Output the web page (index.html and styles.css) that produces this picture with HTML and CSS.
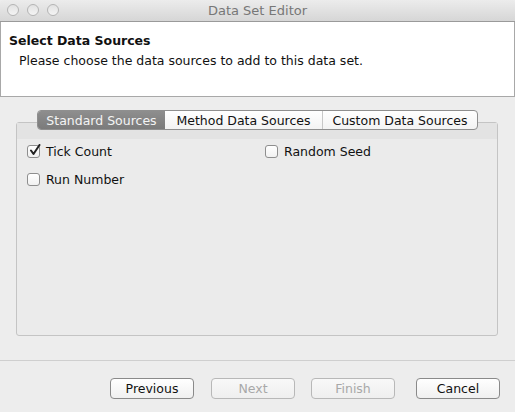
FILE: index.html
```html
<!DOCTYPE html>
<html>
<head>
<meta charset="utf-8">
<link rel="stylesheet" href="styles.css">
</head>
<body>
<div class="window">
  <div class="titlebar">
    <div class="lights">
      <span class="light"></span><span class="light"></span><span class="light"></span>
    </div>
    <div class="title">Data Set Editor</div>
  </div>
  <div class="header">
    <div class="h-title">Select Data Sources</div>
    <div class="h-desc">Please choose the data sources to add to this data set.</div>
  </div>
  <div class="body">
    <div class="tabs">
      <div class="tab selected">Standard Sources</div>
      <div class="tab">Method Data Sources</div>
      <div class="tab">Custom Data Sources</div>
    </div>
    <div class="panel">
      <div class="band"></div>
      <div class="grid">
        <label class="check"><span class="box checked"><svg width="13" height="13" viewBox="0 0 13 13"><path d="M3 6.5 L5.5 10 L11.5 1" fill="none" stroke="#222" stroke-width="2" stroke-linecap="round" stroke-linejoin="round"/></svg></span>Tick Count</label>
        <label class="check"><span class="box"></span>Random Seed</label>
        <label class="check"><span class="box"></span>Run Number</label>
      </div>
    </div>
  </div>
  <div class="sep"></div>
  <div class="buttons">
    <button class="btn">Previous</button>
    <button class="btn disabled">Next</button>
    <button class="btn disabled finish">Finish</button>
    <button class="btn">Cancel</button>
  </div>
</div>
</body>
</html>
```
FILE: styles.css
```css
html, body {
  margin: 0;
  padding: 0;
  background: #ededed;
}
.window {
  width: 515px;
  height: 412px;
  font-family: "DejaVu Sans", "Liberation Sans", sans-serif;
  font-size: 12.5px;
  color: #111;
  overflow: hidden;
}
.titlebar {
  height: 21px;
  border-bottom: 1px solid #9a9a9a;
  background: linear-gradient(#ececec, #d6d6d6);
  border-radius: 4px 4px 0 0;
  position: relative;
  display: flex;
  align-items: center;
  justify-content: center;
}
.lights {
  position: absolute;
  left: 7px;
  top: 4px;
  display: flex;
  gap: 8px;
}
.light {
  width: 12px;
  height: 12px;
  border-radius: 50%;
  border: 1px solid #b4b4b4;
  background: linear-gradient(#e2e2e2, #f4f4f4);
  box-sizing: border-box;
  display: block;
}
.title {
  color: #777;
  font-size: 13px;
}
.header {
  background: #fff;
  height: 74px;
  border: 1px solid #a8a8a8;
  border-top: none;
  padding: 0 8px;
}
.h-title {
  font-weight: bold;
  padding-top: 11px;
}
.h-desc {
  padding-left: 10px;
  padding-top: 5px;
}
.body {
  padding: 13px 17px 0 16px;
}
.tabs {
  display: flex;
  margin-left: 21px;
  width: 441px;
  height: 20px;
  position: relative;
  z-index: 1;
  border: 1px solid #8f8f8f;
  border-radius: 4px;
  box-sizing: border-box;
  background: linear-gradient(#ffffff, #f3f3f3);
  overflow: hidden;
}
.tab {
  display: flex;
  align-items: center;
  justify-content: center;
  color: #111;
  border-left: 1px solid #c8c8c8;
}
.tab:nth-child(1) { width: 127px; border-left: none; }
.tab:nth-child(2) { width: 157px; }
.tab:nth-child(3) { flex: 1; }
.tab.selected {
  background: linear-gradient(#8e8e8e, #7b7b7b);
  color: #f4f4f4;
}
.tab.selected + .tab { border-left: none; }
.panel {
  margin-top: -8px;
  height: 214px;
  border: 1px solid #c4c4c4;
  border-radius: 3px;
  background: #ebebeb;
  box-sizing: border-box;
}
.band {
  height: 16px;
  background: #e3e3e3;
}
.grid {
  display: grid;
  grid-template-columns: 238px 1fr;
  row-gap: 9px;
  padding: 3px 0 0 10px;
}
.check {
  display: flex;
  align-items: center;
  gap: 6px;
  height: 19px;
}
.box {
  width: 13px;
  height: 13px;
  border: 1px solid #8e8e8e;
  border-radius: 3px;
  background: linear-gradient(#ffffff, #f1f1f1);
  box-sizing: border-box;
  position: relative;
}
.box svg {
  position: absolute;
  left: 0px;
  top: -2px;
}
.sep {
  margin-top: 24px;
  height: 1px;
  background: #cfcfcf;
}
.buttons {
  display: flex;
  justify-content: flex-end;
  gap: 16px;
  padding: 17px 15px 0 0;
}
.btn {
  width: 84px;
  height: 21px;
  border: 1px solid #8a8a8a;
  border-radius: 4px;
  background: linear-gradient(#ffffff, #f0f0f0);
  font-family: "DejaVu Sans", "Liberation Sans", sans-serif;
  font-size: 12.5px;
  color: #111;
  padding: 0;
  margin: 0;
}
.btn:first-child { margin-right: 1px; }
.btn.finish { margin-right: 5px; }
.btn.disabled {
  color: #a8a8a8;
  border-color: #b8b8b8;
  background: linear-gradient(#f8f8f8, #efefef);
}
```
